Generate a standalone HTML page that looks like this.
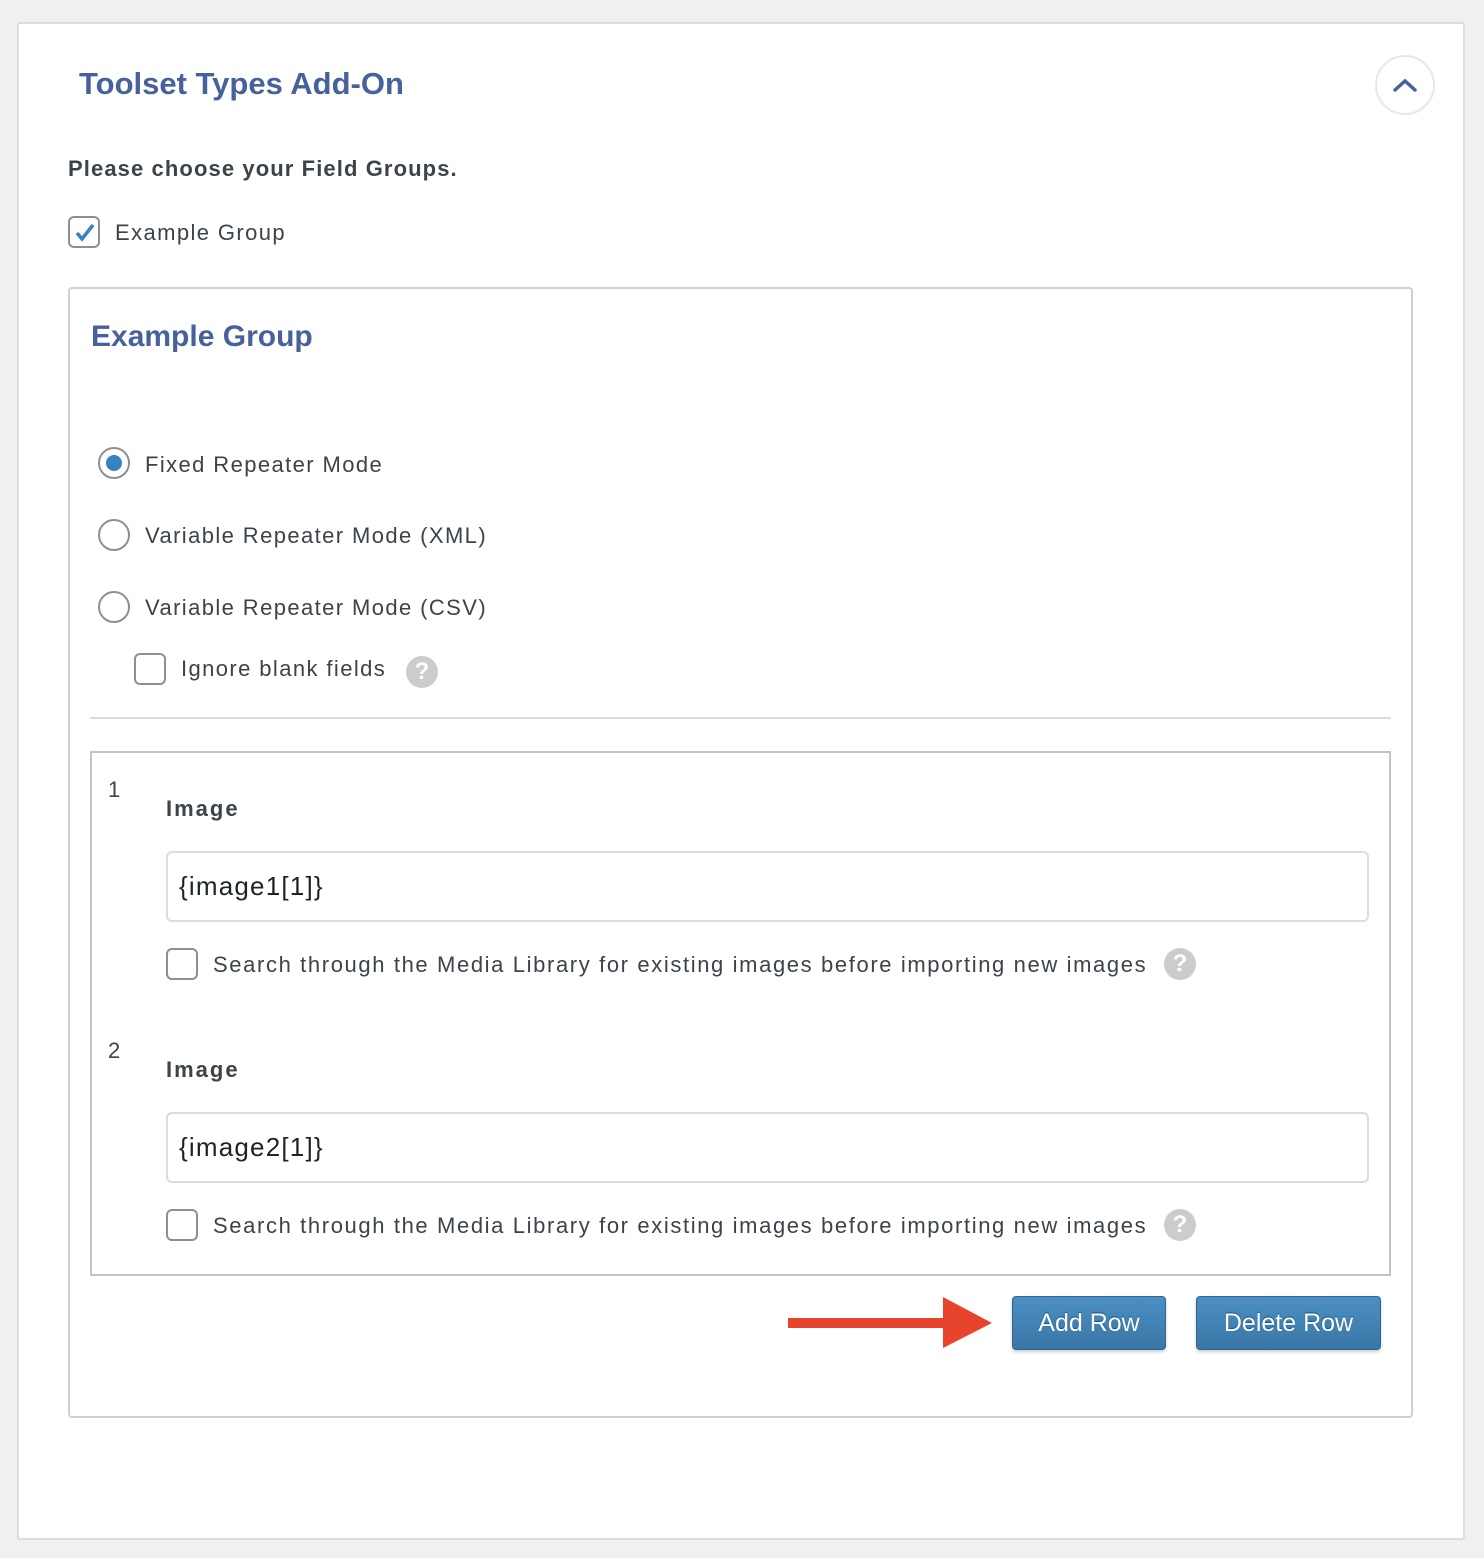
<!DOCTYPE html>
<html><head><meta charset="utf-8"><style>
*{margin:0;padding:0;box-sizing:border-box}
body{width:1484px;height:1558px;background:#f0f0f1;font-family:"Liberation Sans",sans-serif;color:#3c434a;position:relative;overflow:hidden}
.a{position:absolute;white-space:nowrap}
.card{position:absolute;left:17px;top:22px;width:1448px;height:1518px;background:#fff;border:2px solid #dcdcde;border-radius:3px}
.t{font-weight:bold;color:#46619c;font-size:30px}
.l{font-size:22px;line-height:26px;letter-spacing:1.4px}
.cb{position:absolute;width:32px;height:32px;border:2px solid #8c8f94;border-radius:6px;background:#fff}
.rd{position:absolute;width:32px;height:32px;border:2px solid #8c8f94;border-radius:50%;background:#fff}
.help{position:absolute;width:32px;height:32px;border-radius:50%;background:#ccc;color:#fff;font-weight:bold;font-size:24px;text-align:center;line-height:32px}
.inp{position:absolute;left:166px;width:1203px;height:71px;border:2px solid #dcdcde;border-radius:6px;font-size:26px;color:#1d2327;padding-left:11px;line-height:67px;letter-spacing:1.2px}
.btn{position:absolute;top:1296px;height:54px;border-radius:4px;background:linear-gradient(#4a90c2,#3a76a6);border:1px solid #2f6690;box-shadow:0 2px 3px rgba(0,0,0,.2);color:#fff;font-size:25px;text-align:center;line-height:52px;text-shadow:0 -1px 1px #1d4f78}
</style></head><body>
<div class="card"></div>
<div class="a t" style="left:79px;top:66px;font-size:31px">Toolset Types Add-On</div>
<div class="a" style="left:1375px;top:55px;width:60px;height:60px;border:2px solid #e8e8ea;border-radius:50%"></div>
<svg class="a" style="left:1392px;top:76px" width="26" height="18"><path d="M3 14 L13 5 L23 14" stroke="#46619c" stroke-width="3.5" fill="none" stroke-linecap="round"/></svg>
<div class="a" style="left:68px;top:156px;font-size:22px;font-weight:bold;letter-spacing:1.1px">Please choose your Field Groups.</div>
<div class="cb" style="left:68px;top:216px"></div>
<svg class="a" style="left:72px;top:220px" width="26" height="26"><path d="M5 13 L10 19 L21 5" stroke="#3582c4" stroke-width="3.5" fill="none"/></svg>
<div class="a l" style="left:115px;top:220px">Example Group</div>
<div class="a" style="left:68px;top:287px;width:1345px;height:1131px;border:2px solid #d0d0d3;border-radius:4px"></div>
<div class="a t" style="left:91px;top:320px">Example Group</div>
<div class="rd" style="left:98px;top:447px"></div><div class="a" style="left:106px;top:455px;width:16px;height:16px;border-radius:50%;background:#3582c4"></div>
<div class="a l" style="left:145px;top:452px">Fixed Repeater Mode</div>
<div class="rd" style="left:98px;top:519px"></div>
<div class="a l" style="left:145px;top:523px">Variable Repeater Mode (XML)</div>
<div class="rd" style="left:98px;top:591px"></div>
<div class="a l" style="left:145px;top:595px">Variable Repeater Mode (CSV)</div>
<div class="cb" style="left:134px;top:653px"></div>
<div class="a l" style="left:181px;top:656px">Ignore blank fields</div>
<div class="help" style="left:406px;top:656px">?</div>
<div class="a" style="left:90px;top:717px;width:1301px;height:2px;background:#dcdcde"></div>
<div class="a" style="left:90px;top:751px;width:1301px;height:525px;border:2px solid #c3c4c7"></div>
<div class="a l" style="left:108px;top:777px">1</div>
<div class="a l" style="left:166px;top:796px;font-weight:bold;letter-spacing:2px">Image</div>
<div class="inp" style="top:851px">{image1[1]}</div>
<div class="cb" style="left:166px;top:948px"></div>
<div class="a l" style="left:213px;top:952px;letter-spacing:1.62px">Search through the Media Library for existing images before importing new images</div>
<div class="help" style="left:1164px;top:948px">?</div>
<div class="a l" style="left:108px;top:1038px">2</div>
<div class="a l" style="left:166px;top:1057px;font-weight:bold;letter-spacing:2px">Image</div>
<div class="inp" style="top:1112px">{image2[1]}</div>
<div class="cb" style="left:166px;top:1209px"></div>
<div class="a l" style="left:213px;top:1213px;letter-spacing:1.62px">Search through the Media Library for existing images before importing new images</div>
<div class="help" style="left:1164px;top:1209px">?</div>
<svg class="a" style="left:786px;top:1295px" width="210" height="56"><rect x="2" y="23" width="160" height="10" fill="#e8432d"/><path d="M157 2 L206 28 L157 53 Z" fill="#e8432d"/></svg>
<div class="btn" style="left:1012px;width:154px">Add Row</div>
<div class="btn" style="left:1196px;width:185px">Delete Row</div>
</body></html>
